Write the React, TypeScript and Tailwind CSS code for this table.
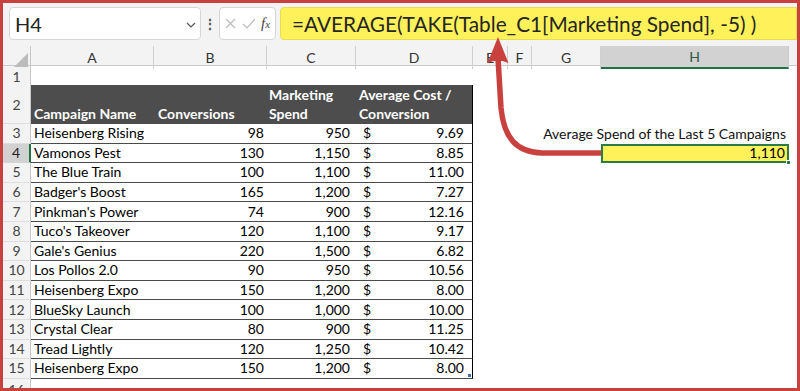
import React from 'react';

const cols = 'grid grid-cols-[28px_123px_113px_89px_117px_35px_24px_69px_188px_1fr]';

const rows = [
  ['Heisenberg Rising', '98', '950', '9.69'],
  ['Vamonos Pest', '130', '1,150', '8.85'],
  ['The Blue Train', '100', '1,100', '11.00'],
  ["Badger's Boost", '165', '1,200', '7.27'],
  ["Pinkman's Power", '74', '900', '12.16'],
  ["Tuco's Takeover", '120', '1,100', '9.17'],
  ["Gale's Genius", '220', '1,500', '6.82'],
  ['Los Pollos 2.0', '90', '950', '10.56'],
  ['Heisenberg Expo', '150', '1,200', '8.00'],
  ['BlueSky Launch', '100', '1,000', '10.00'],
  ['Crystal Clear', '80', '900', '11.25'],
  ['Tread Lightly', '120', '1,250', '10.42'],
  ['Heisenberg Expo', '150', '1,200', '8.00'],
];

const RowNum: React.FC<{ n: number; active?: boolean }> = ({ n, active }) => (
  <div
    className={
      active
        ? 'flex items-center justify-center bg-[#d2d2d2] text-[#1f1f1f] border-r-2 border-r-[#217346] border-b border-b-[#d4d4d4]'
        : 'flex items-center justify-center bg-[#f3f3f3] text-[#444] border-r border-r-[#c8c8c8] border-b border-b-[#dedede]'
    }
  >
    {n}
  </div>
);

const App: React.FC = () => {
  return (
    <div className="relative w-[800px] h-[391px] overflow-hidden border-[3px] border-[#c8413f] bg-white font-['Lato',sans-serif] text-[14px] text-black">
      {/* formula bar */}
      <div className="flex items-start h-[43px] bg-[#f3f3f3] pt-[4px]">
        <div className="ml-[6px] w-[192px] h-[33px] flex items-center justify-between bg-white border border-[#d6d6d6] rounded-[4px] pl-[5px] pr-[4px]">
          <span className="text-[20px] text-[#222]">H4</span>
          <svg width="10" height="6" viewBox="0 0 10 6" className="mt-[2px]">
            <path d="M1 1 L5 5 L9 1" fill="none" stroke="#555" strokeWidth="1.2" />
          </svg>
        </div>
        <div className="w-[18px] h-[33px] flex items-center justify-center text-[#555] text-[14px] font-bold">⋮</div>
        <div className="w-[57px] h-[33px] flex items-center gap-[5px] bg-white border border-[#d6d6d6] rounded-[4px] px-[4px]">
          <svg width="13" height="13" viewBox="0 0 13 13">
            <path d="M2 2 L11 11 M11 2 L2 11" stroke="#bbb" strokeWidth="1.2" />
          </svg>
          <svg width="14" height="13" viewBox="0 0 14 13">
            <path d="M1 7 L5 11 L13 2" fill="none" stroke="#bbb" strokeWidth="1.2" />
          </svg>
          <span className="font-['Liberation_Serif',serif] italic text-[15px] text-[#444] leading-none">
            f<span className="text-[11px]">x</span>
          </span>
        </div>
        <div className="ml-[4px] flex-1 h-[33px] flex items-center bg-[#fff15a] border border-[#e8dc55] rounded-l-[4px] pl-[11px] text-[20.8px] text-[#262626] whitespace-nowrap">
          =AVERAGE(TAKE(Table_C1[Marketing Spend], -5) )
        </div>
      </div>

      {/* column headers */}
      <div className={`${cols} h-[20px] bg-[#f3f3f3] text-[14px] text-[#333] border-b border-[#c8c8c8]`}>
        <div className="relative border-r border-[#c8c8c8]">
          <svg width="14" height="14" viewBox="0 0 14 14" className="absolute right-[2px] bottom-[2px]">
            <polygon points="14,0 14,14 0,14" fill="#bcbcbc" />
          </svg>
        </div>
        {['A', 'B', 'C', 'D', 'E', 'F', 'G'].map((c) => (
          <div key={c} className="flex items-center justify-center border-r border-[#d0d0d0]">
            {c}
          </div>
        ))}
        <div className="flex items-center justify-center bg-[#d2d2d2] text-[#2a5c45] border-b-2 border-[#217346] border-r border-r-[#c8c8c8]">
          H
        </div>
        <div />
      </div>

      {/* row 1 */}
      <div className={`${cols} h-[19px]`}>
        <RowNum n={1} />
      </div>

      {/* row 2 - table header */}
      <div className={`${cols} h-[39px]`}>
        <RowNum n={2} />
        <div className="flex items-end bg-[#4d4d4d] text-white font-bold pl-[3px] pb-[1px] leading-[19px]">Campaign Name</div>
        <div className="flex items-end bg-[#4d4d4d] text-white font-bold pl-[4px] pb-[1px] leading-[19px]">Conversions</div>
        <div className="flex items-end bg-[#4d4d4d] text-white font-bold pl-[2px] pb-[1px] leading-[19px]">
          Marketing
          <br />
          Spend
        </div>
        <div className="flex items-end bg-[#4d4d4d] text-white font-bold pl-[3px] pb-[1px] leading-[19px] border-r border-black">
          Average Cost /
          <br />
          Conversion
        </div>
      </div>

      {/* data rows */}
      {rows.map((r, i) => {
        const n = i + 3;
        return (
          <div key={n} className={`${cols} h-[19.6px] leading-none`}>
            <RowNum n={n} active={n === 4} />
            <div className="flex items-center pl-[3px] border-b border-[#4a4a4a] whitespace-nowrap">{r[0]}</div>
            <div className="flex items-center justify-end pr-[3px] border-b border-[#4a4a4a]">{r[1]}</div>
            <div className="flex items-center justify-end pr-[6px] border-b border-[#4a4a4a]">{r[2]}</div>
            <div className="relative flex items-center justify-between pl-[7px] pr-[8px] border-b border-r border-[#4a4a4a] border-r-black">
              <span>$</span>
              <span>{r[3]}</span>
              {n === 15 && <span className="absolute right-[1px] bottom-[1px] w-[3px] h-[3px] bg-[#3b6fb0]" />}
            </div>
            <div />
            <div />
            <div />
            {n === 3 && (
              <div className="flex items-center justify-end pr-[3px] whitespace-nowrap text-[#111]">
                Average Spend of the Last 5 Campaigns
              </div>
            )}
            {n === 4 && (
              <div className="relative flex items-center justify-end pr-[2px] bg-[#fff15a] border-2 border-[#2c7a45]">
                1,110
                <span className="absolute -right-[4px] -bottom-[4px] w-[5px] h-[5px] bg-[#2c7a45] border border-white" />
              </div>
            )}
          </div>
        );
      })}

      {/* row 16, mostly hidden below the frame */}
      <div className={`${cols} h-[12px]`}>
        <RowNum n={16} />
      </div>

      {/* arrow */}
      <svg className="absolute left-[-3px] top-[-3px] pointer-events-none" width="800" height="391" viewBox="0 0 800 391">
        <path
          d="M601 153 L542 153 C516 152 504 138 501 108 L498 58"
          fill="none"
          stroke="#c8413f"
          strokeWidth="5.5"
        />
        <path d="M498 37 L508.5 63 Q498 58 487.5 63 Z" fill="#c8413f" />
      </svg>
    </div>
  );
};

export default App;
